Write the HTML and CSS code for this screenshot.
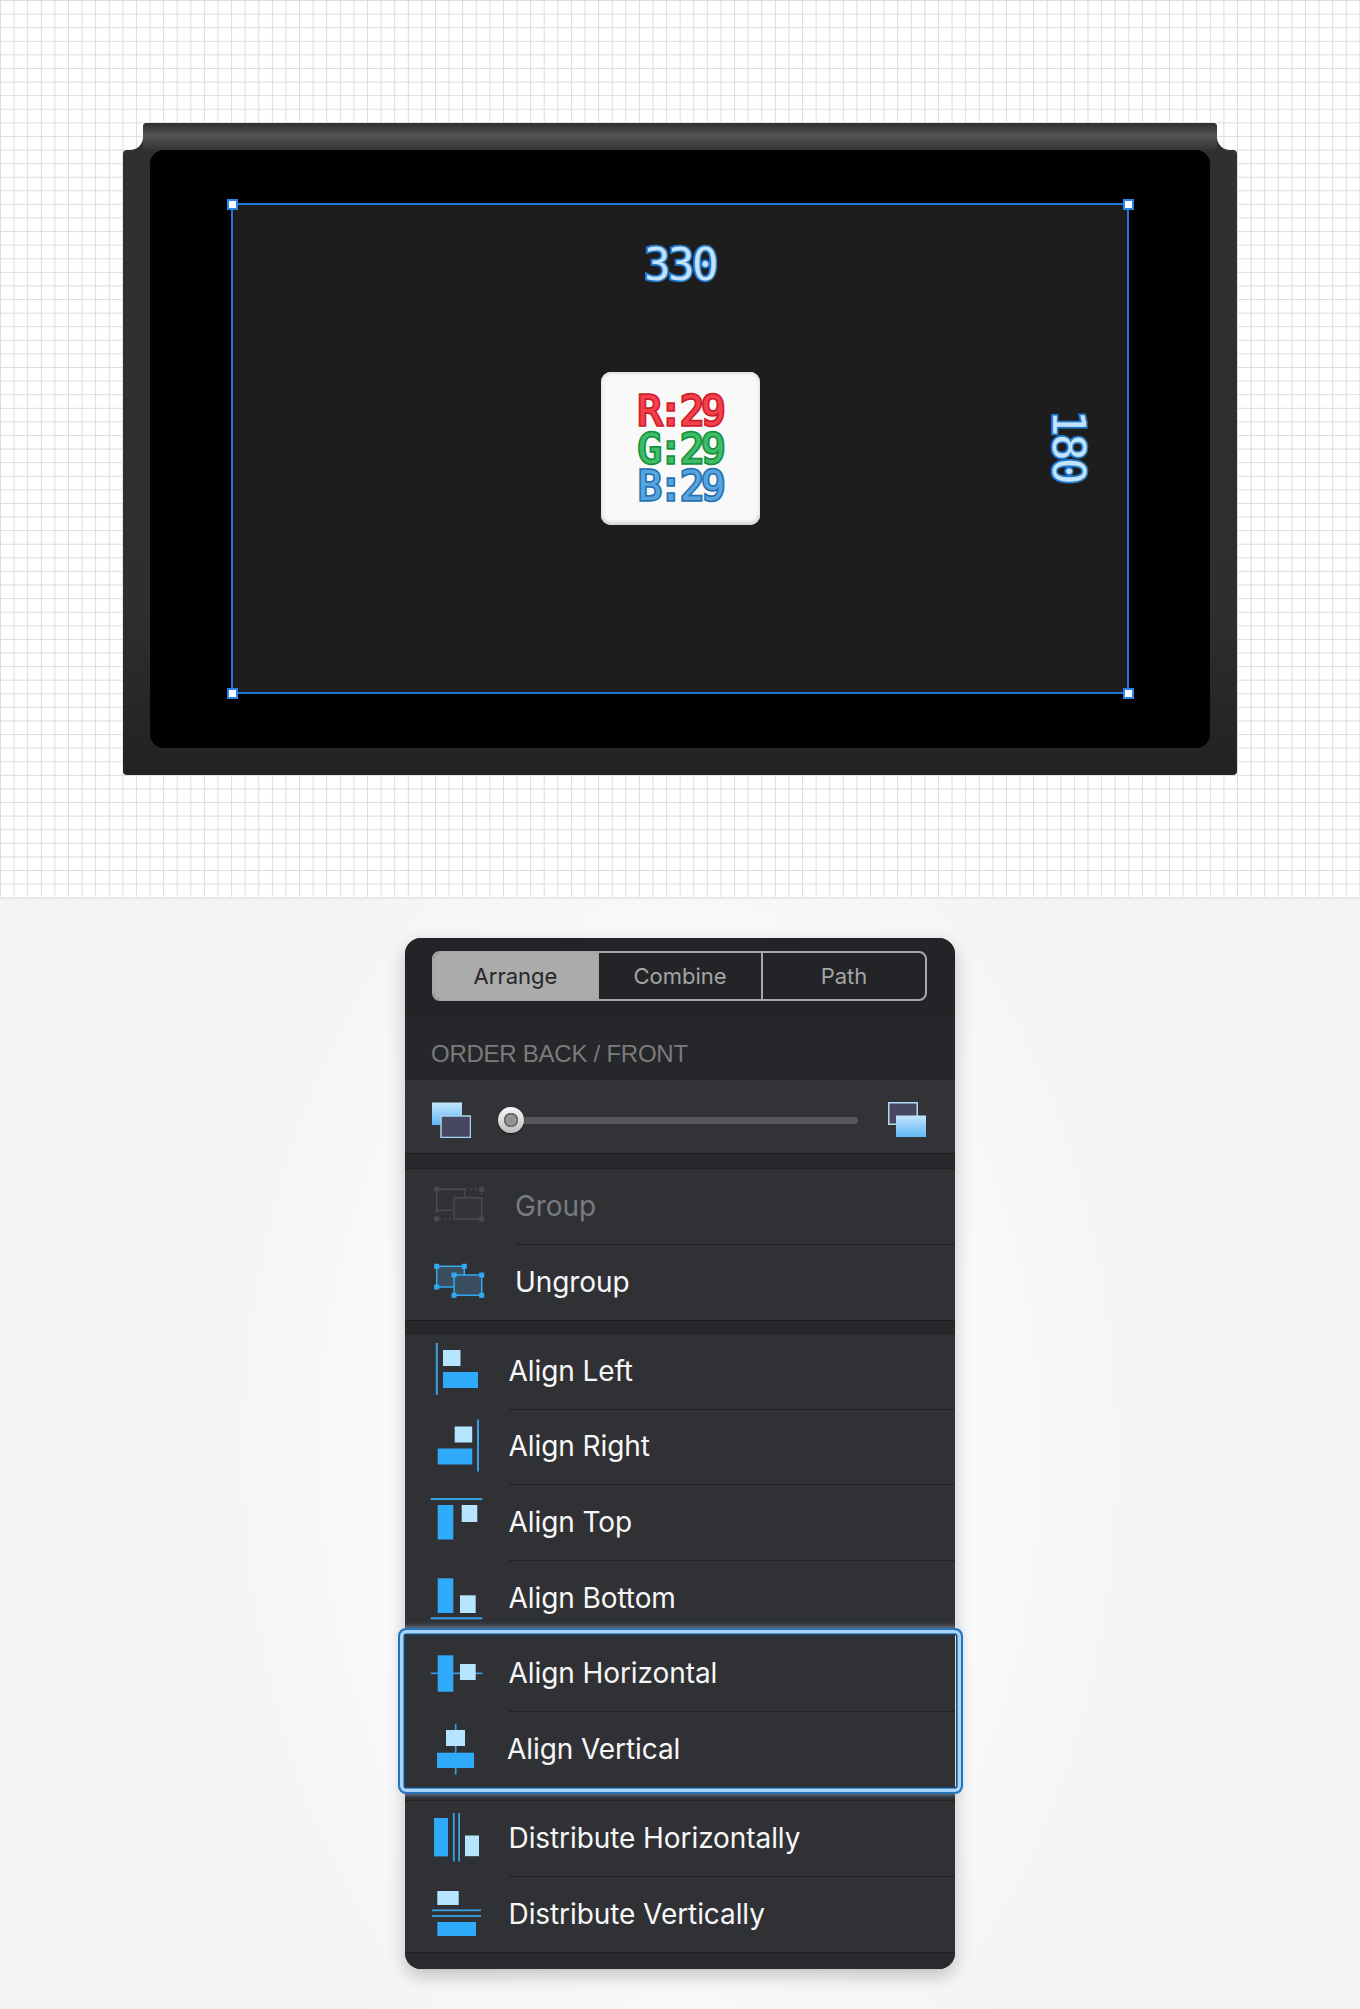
FILE: index.html
```html
<!DOCTYPE html>
<html lang="en">
<head>
<meta charset="utf-8">
<title>Align panel</title>
<link rel="stylesheet" href="styles.css">
</head>
<body>
<section class="canvas">
  <div class="device">
    <svg class="shell" width="1114" height="652" viewBox="0 0 1114 652">
      <defs>
        <linearGradient id="shellBody" x1="0" y1="0" x2="0" y2="1">
          <stop offset="0" stop-color="#2f3032"/>
          <stop offset="0.75" stop-color="#2d2e30"/>
          <stop offset="1" stop-color="#212224"/>
        </linearGradient>
        <linearGradient id="shellTop" x1="0" y1="0" x2="0" y2="1">
          <stop offset="0" stop-color="#2e2e30"/>
          <stop offset="0.45" stop-color="#545457"/>
          <stop offset="1" stop-color="#343436"/>
        </linearGradient>
      </defs>
      <path fill="url(#shellBody)" d="M24 0H1090Q1094 0 1094 4V14A13 13 0 0 0 1107 27H1110Q1114 27 1114 31V648Q1114 652 1110 652H4Q0 652 0 648V31Q0 27 4 27H7A13 13 0 0 0 20 14V4Q20 0 24 0Z"/>
      <path fill="url(#shellTop)" d="M24 0H1090Q1094 0 1094 4V27H20V4Q20 0 24 0Z"/>
    </svg>
    <div class="screen">
      <div class="selection">
        <span class="handle handle-tl"></span>
        <span class="handle handle-tr"></span>
        <span class="handle handle-bl"></span>
        <span class="handle handle-br"></span>
        <span class="dim dim-w">330</span>
        <span class="dim dim-h">180</span>
        <div class="swatch">
          <span class="rgb rgb-r">R:29</span>
          <span class="rgb rgb-g">G:29</span>
          <span class="rgb rgb-b">B:29</span>
        </div>
      </div>
    </div>
  </div>
</section>

<section class="stage">
  <div class="panel">
    <div class="tabs">
      <div class="segments">
        <span class="segment segment-on">Arrange</span>
        <span class="segment">Combine</span>
        <span class="segment">Path</span>
      </div>
    </div>
    <div class="section-head">ORDER BACK / FRONT</div>
    <div class="slider-row">
      <svg class="order-icon" width="39" height="36" viewBox="0 0 39 36">
        <defs>
          <linearGradient id="lightBlue" x1="0" y1="0" x2="0" y2="1">
            <stop offset="0" stop-color="#c4e6fc"/>
            <stop offset="1" stop-color="#62b6f8"/>
          </linearGradient>
        </defs>
        <rect x="0" y="0.5" width="30" height="22.5" fill="url(#lightBlue)"/>
        <rect x="9" y="14" width="29.5" height="21.5" fill="#47475f" stroke="#a5d2f2" stroke-width="1.5"/>
      </svg>
      <div class="slider">
        <span class="knob"></span>
      </div>
      <svg class="order-icon" width="38" height="36" viewBox="0 0 38 36">
        <defs>
          <linearGradient id="lightBlue2" x1="0" y1="0" x2="0" y2="1">
            <stop offset="0" stop-color="#c4e6fc"/>
            <stop offset="1" stop-color="#62b6f8"/>
          </linearGradient>
        </defs>
        <rect x="0.75" y="0.75" width="28.5" height="21.5" fill="#47475f" stroke="#b5d9f4" stroke-width="1.5"/>
        <rect x="8" y="13.5" width="30" height="21.5" fill="url(#lightBlue2)"/>
      </svg>
    </div>
    <div class="strip"></div>

    <div class="row">
      <svg class="icon" width="60" height="75" viewBox="0 0 60 75">
        <g fill="none" stroke="#4b4b4e" stroke-width="1.5">
          <rect x="11.7" y="20.3" width="28" height="21"/>
          <rect x="29" y="28.7" width="27.7" height="21.3" fill="#343538"/>
          <path stroke-dasharray="2 3" d="M40 20.3H56.7V28M11.7 42V50H29"/>
        </g>
        <g fill="#4b4b4e">
          <rect x="9.2" y="17.8" width="5" height="5"/>
          <rect x="54.2" y="17.8" width="5" height="5"/>
          <rect x="9.2" y="47.5" width="5" height="5"/>
          <rect x="54.2" y="47.5" width="5" height="5"/>
        </g>
      </svg>
      <span class="label label-wide label-off">Group</span>
    </div>
    <div class="row">
      <svg class="icon" width="60" height="75" viewBox="0 0 60 75">
        <g fill="#3a4e5f" stroke="#2fabf5" stroke-width="1.5">
          <rect x="11.7" y="21.3" width="27.6" height="20.7"/>
          <rect x="29" y="30" width="27.7" height="20.3"/>
        </g>
        <g fill="#2fabf5">
          <rect x="9.2" y="18.8" width="5" height="5"/>
          <rect x="36.8" y="18.8" width="5" height="5"/>
          <rect x="9.2" y="39.5" width="5" height="5"/>
          <rect x="26.5" y="27.5" width="5" height="5"/>
          <rect x="54.2" y="27.5" width="5" height="5"/>
          <rect x="26.5" y="47.8" width="5" height="5"/>
          <rect x="54.2" y="47.8" width="5" height="5"/>
        </g>
      </svg>
      <span class="label label-wide label-last">Ungroup</span>
    </div>
    <div class="strip strip-short"></div>

    <div class="row">
      <svg class="icon" width="60" height="75" viewBox="0 0 60 75">
        <rect class="ln" x="10.8" y="9" width="2" height="52"/>
        <rect class="lt" x="18" y="16" width="17.5" height="16"/>
        <rect class="bl" x="18" y="38" width="35" height="16"/>
      </svg>
      <span class="label">Align Left</span>
    </div>
    <div class="row">
      <svg class="icon" width="60" height="75" viewBox="0 0 60 75">
        <rect class="ln" x="52" y="9.5" width="2" height="52"/>
        <rect class="lt" x="29.7" y="16.5" width="17.5" height="16"/>
        <rect class="bl" x="12.7" y="38.5" width="34.5" height="16"/>
      </svg>
      <span class="label">Align Right</span>
    </div>
    <div class="row">
      <svg class="icon" width="60" height="75" viewBox="0 0 60 75">
        <rect class="ln" x="5.7" y="13" width="51.6" height="2"/>
        <rect class="bl" x="12.7" y="20" width="15.6" height="34.5"/>
        <rect class="lt" x="36.7" y="20" width="15.6" height="17"/>
      </svg>
      <span class="label">Align Top</span>
    </div>
    <div class="row">
      <svg class="icon" width="60" height="75" viewBox="0 0 60 75">
        <rect class="ln" x="5.7" y="56.3" width="51.6" height="2"/>
        <rect class="bl" x="12.7" y="17.3" width="15.6" height="34.7"/>
        <rect class="lt" x="35" y="34.3" width="15.7" height="17.7"/>
      </svg>
      <span class="label label-last">Align Bottom</span>
    </div>

    <div class="focus-group">
      <div class="row">
        <svg class="icon" width="60" height="75" viewBox="0 0 60 75">
          <rect class="ln" x="5.7" y="36.5" width="51.6" height="1.6"/>
          <rect class="bl" x="12.7" y="19.3" width="15.6" height="36.4"/>
          <rect class="lt" x="35" y="28" width="15.7" height="16"/>
        </svg>
        <span class="label">Align Horizontal</span>
      </div>
      <div class="row">
        <svg class="icon" width="60" height="75" viewBox="0 0 60 75">
          <rect class="ln" x="29.9" y="11.7" width="1.6" height="51"/>
          <rect class="lt" x="21" y="18" width="19" height="16"/>
          <rect class="bl" x="12" y="40.7" width="37" height="15.3"/>
        </svg>
        <span class="label label-last label-nudge">Align Vertical</span>
      </div>
    </div>
    <div class="strip strip-short"></div>

    <div class="row">
      <svg class="icon" width="60" height="75" viewBox="0 0 60 75">
        <rect class="bl" x="9" y="17" width="14" height="38.4"/>
        <rect class="ln" x="27.9" y="12" width="1.8" height="48.5"/>
        <rect class="ln" x="33.2" y="12" width="1.8" height="48.5"/>
        <rect class="lt" x="40" y="34.5" width="14" height="20.7"/>
      </svg>
      <span class="label">Distribute Horizontally</span>
    </div>
    <div class="row">
      <svg class="icon" width="60" height="75" viewBox="0 0 60 75">
        <rect class="lt" x="12.3" y="14" width="21.4" height="14"/>
        <rect class="ln" x="7" y="32.4" width="49" height="1.8"/>
        <rect class="ln" x="7" y="38.1" width="49" height="1.8"/>
        <rect class="bl" x="12.3" y="45" width="38.7" height="14"/>
      </svg>
      <span class="label label-last">Distribute Vertically</span>
    </div>
    <div class="foot"></div>
  </div>
</section>
</body>
</html>
```

FILE: styles.css
```css
* { box-sizing: border-box; }

html, body { margin: 0; padding: 0; }

body {
  width: 1360px;
  height: 2009px;
  overflow: hidden;
  background: #f4f4f4;
  font-family: "Inter", "Liberation Sans", sans-serif;
}

/* Upper artboard */
.canvas {
  height: 899px;
  padding: 123px 123px 0;
  background-color: #ffffff;
  background-image:
    linear-gradient(to right, #dcdce0 0, #dcdce0 1.4px, transparent 1.4px),
    linear-gradient(to bottom, #dcdce0 0, #dcdce0 1.4px, transparent 1.4px);
  background-size: 13.6px 13.6px;
  background-position: 0 0;
  border-bottom: 2px solid #e9e9e9;
}

.device {
  position: relative;
  width: 1114px;
  height: 652px;
  padding: 27px 27px 27px 27px;
}

.shell {
  position: absolute;
  left: 0;
  top: 0;
  display: block;
}

.screen {
  position: relative;
  height: 598px;
  padding: 53px 81px;
  background: #000000;
  border-radius: 14px;
}

.selection {
  position: relative;
  display: flex;
  align-items: center;
  justify-content: center;
  height: 491px;
  background: #1d1d1d;
  border: 2px solid #2078d6;
}

.handle {
  position: absolute;
  width: 11px;
  height: 11px;
  background: #ffffff;
  border: 2px solid #2a86e6;
}
.handle-tl { left: -6.5px; top: -6.5px; }
.handle-tr { right: -6.5px; top: -6.5px; }
.handle-bl { left: -6.5px; bottom: -6.5px; }
.handle-br { right: -6.5px; bottom: -6.5px; }

.dim {
  position: absolute;
  font-family: "DejaVu Sans Mono", "Liberation Mono", monospace;
  font-size: 44px;
  line-height: 44px;
  letter-spacing: -2.5px;
  color: #c4e2fb;
  -webkit-text-stroke: 3.5px #2279cc;
  paint-order: stroke fill;
}
.dim-w { left: 411px; top: 38px; }
.dim-h { left: 799px; top: 219px; transform: rotate(90deg); transform-origin: center; }

.swatch {
  display: flex;
  flex-direction: column;
  align-items: center;
  justify-content: center;
  width: 159px;
  height: 153px;
  padding-top: 2px;
  background: #f9f9f9;
  border-radius: 10px;
  box-shadow: inset 0 2px 1px #e4e4e4, inset 0 -3px 3px #d6d6d6, inset 0 0 6px #e6e6e6;
}

.rgb {
  display: block;
  height: 37.5px;
  font-family: "DejaVu Sans Mono", "Liberation Mono", monospace;
  font-size: 40px;
  font-weight: 400;
  line-height: 37.5px;
  letter-spacing: -2.9px;
  paint-order: stroke fill;
  -webkit-text-stroke-width: 3.5px;
}
.rgb-r { color: #f2424b; -webkit-text-stroke-color: #cf1c2c; }
.rgb-g { color: #40bb6c; -webkit-text-stroke-color: #14933d; }
.rgb-b { color: #5aa4dd; -webkit-text-stroke-color: #2473b2; }

/* Lower panel */
.stage {
  height: 1110px;
  padding-top: 39px;
  background: radial-gradient(ellipse 480px 740px at 50% 50%, #fbfbfb 0, #fafafa 60%, #f4f4f4 100%);
}

.panel {
  width: 550px;
  height: 1031px;
  margin: 0 auto;
  background: #2f3135;
  border-radius: 16px;
  box-shadow: 0 7px 18px rgba(0, 0, 0, 0.22);
}

.tabs {
  height: 76px;
  padding: 13px 28px 0 27px;
  background: #232427;
  border-radius: 16px 16px 0 0;
}

.segments {
  display: flex;
  width: 495px;
  height: 50px;
  border: 2px solid #a8a8a8;
  border-radius: 8px;
  overflow: hidden;
}

.segment {
  display: flex;
  align-items: center;
  justify-content: center;
  flex: none;
  width: 164px;
  font-size: 22px;
  color: #a4a4a4;
  border-left: 2px solid #a8a8a8;
}
.segment-on {
  width: 163px;
  border-left: 0;
  background: #ababab;
  color: #26272a;
}

.section-head {
  height: 66px;
  padding: 24px 0 0 26px;
  background: #26272a;
  border-top: 1px solid #1f2022;
  font-family: "Liberation Sans", Arial, sans-serif;
  font-size: 24px;
  letter-spacing: -0.25px;
  line-height: 30px;
  color: #7b7b7b;
}

.slider-row {
  display: flex;
  align-items: center;
  height: 73px;
  padding: 7px 29px 0 27px;
  background: #323337;
}

.order-icon { display: block; flex: none; }

.slider {
  position: relative;
  flex: 1 1 auto;
  height: 7px;
  margin: 0 30px 0 39px;
  background: #58585b;
  border-radius: 4px;
}

.knob {
  position: absolute;
  left: -12px;
  top: -9.5px;
  width: 26px;
  height: 26px;
  border-radius: 50%;
  background:
    radial-gradient(circle at 50% 50%, #8a8a8a 0, #9a9a9a 5px, #585858 6px, #7a7a7a 7px, transparent 7.5px),
    linear-gradient(to bottom, #f8f8f8, #bdbdbd);
  box-shadow: 0 1px 2px rgba(0, 0, 0, 0.5);
}

.strip {
  height: 16px;
  background: #27282b;
  border-top: 1px solid #1c1d1f;
  border-bottom: 1px solid #1f2022;
}
.strip-short { height: 14px; }

.row {
  display: flex;
  height: 75.5px;
  padding-left: 20px;
  background: #2f3135;
}

.icon { display: block; flex: none; }

.label {
  display: flex;
  align-items: center;
  flex: 1 1 auto;
  margin-left: 23.5px;
  padding-bottom: 1px;
  font-size: 28px;
  letter-spacing: -0.08px;
  color: #f7f7f7;
  border-bottom: 1px solid #202124;
}
.label-wide { margin-left: 30px; }
.label-off { color: #7a7b7e; }
.label-last { border-bottom: 0; }
.label-nudge { text-indent: -1.5px; }

.lt { fill: #b5e5ff; }
.bl { fill: #30aafb; }
.ln { fill: #3aa0e2; }

.focus-group { position: relative; }

.focus-group::after {
  content: "";
  position: absolute;
  left: -7.5px;
  right: -8px;
  top: -8px;
  bottom: -7px;
  border: 2px solid #2a72b6;
  border-radius: 8px;
  box-shadow:
    inset 0 0 0 3.5px #a8d5fb,
    inset 0 0 0 5px #0f4a80,
    0 0 6px rgba(190, 225, 255, 0.7);
  pointer-events: none;
}

.foot {
  height: 17px;
  background: #292a2d;
  border-top: 1px solid #1f2023;
  border-radius: 0 0 16px 16px;
}
```
